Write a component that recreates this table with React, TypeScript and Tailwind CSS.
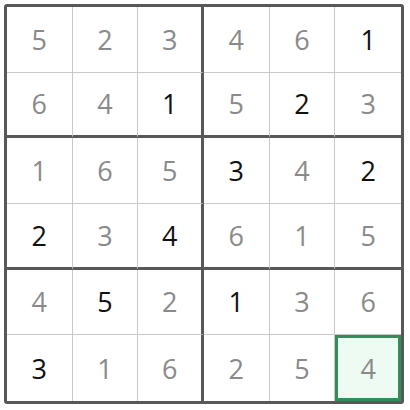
const grid: [number, boolean][][] = [
  [[5, false], [2, false], [3, false], [4, false], [6, false], [1, true]],
  [[6, false], [4, false], [1, true], [5, false], [2, true], [3, false]],
  [[1, false], [6, false], [5, false], [3, true], [4, false], [2, true]],
  [[2, true], [3, false], [4, true], [6, false], [1, false], [5, false]],
  [[4, false], [5, true], [2, false], [1, true], [3, false], [6, false]],
  [[3, true], [1, false], [6, false], [2, false], [5, false], [4, false]],
];

const Cell = ({ value, given, r, c }: { value: number; given: boolean; r: number; c: number }) => {
  const selected = r === 5 && c === 5;
  const right = c === 5 ? '' : c === 2 ? 'border-r-[3px] border-r-[#585858]' : 'border-r border-r-[#c9c9c9]';
  const bottom = r === 5 ? '' : r === 1 || r === 3 ? 'border-b-[3px] border-b-[#585858]' : 'border-b border-b-[#c9c9c9]';
  return (
    <div className={`relative flex items-center justify-center ${right} ${bottom}`}>
      {selected && <div className="absolute inset-0 border-[3px] border-[#2f8f5b] bg-[#eefbf2]" />}
      <span
        className={`relative text-[27px] leading-none ${given ? 'text-[#111111]' : 'text-[#8a8a8a]'}`}
      >
        {value}
      </span>
    </div>
  );
};

export default function App() {
  return (
    <div className="w-[410px] h-[410px] bg-white p-1" style={{ fontFamily: '"Open Sans", "Noto Sans", sans-serif' }}>
      <div className="w-[400px] h-[400px] border-[3px] border-[#585858] rounded-[3px] grid grid-cols-6 grid-rows-6 overflow-hidden">
        {grid.map((row, r) =>
          row.map(([v, g], c) => <Cell key={`${r}-${c}`} value={v} given={g} r={r} c={c} />)
        )}
      </div>
    </div>
  );
}
